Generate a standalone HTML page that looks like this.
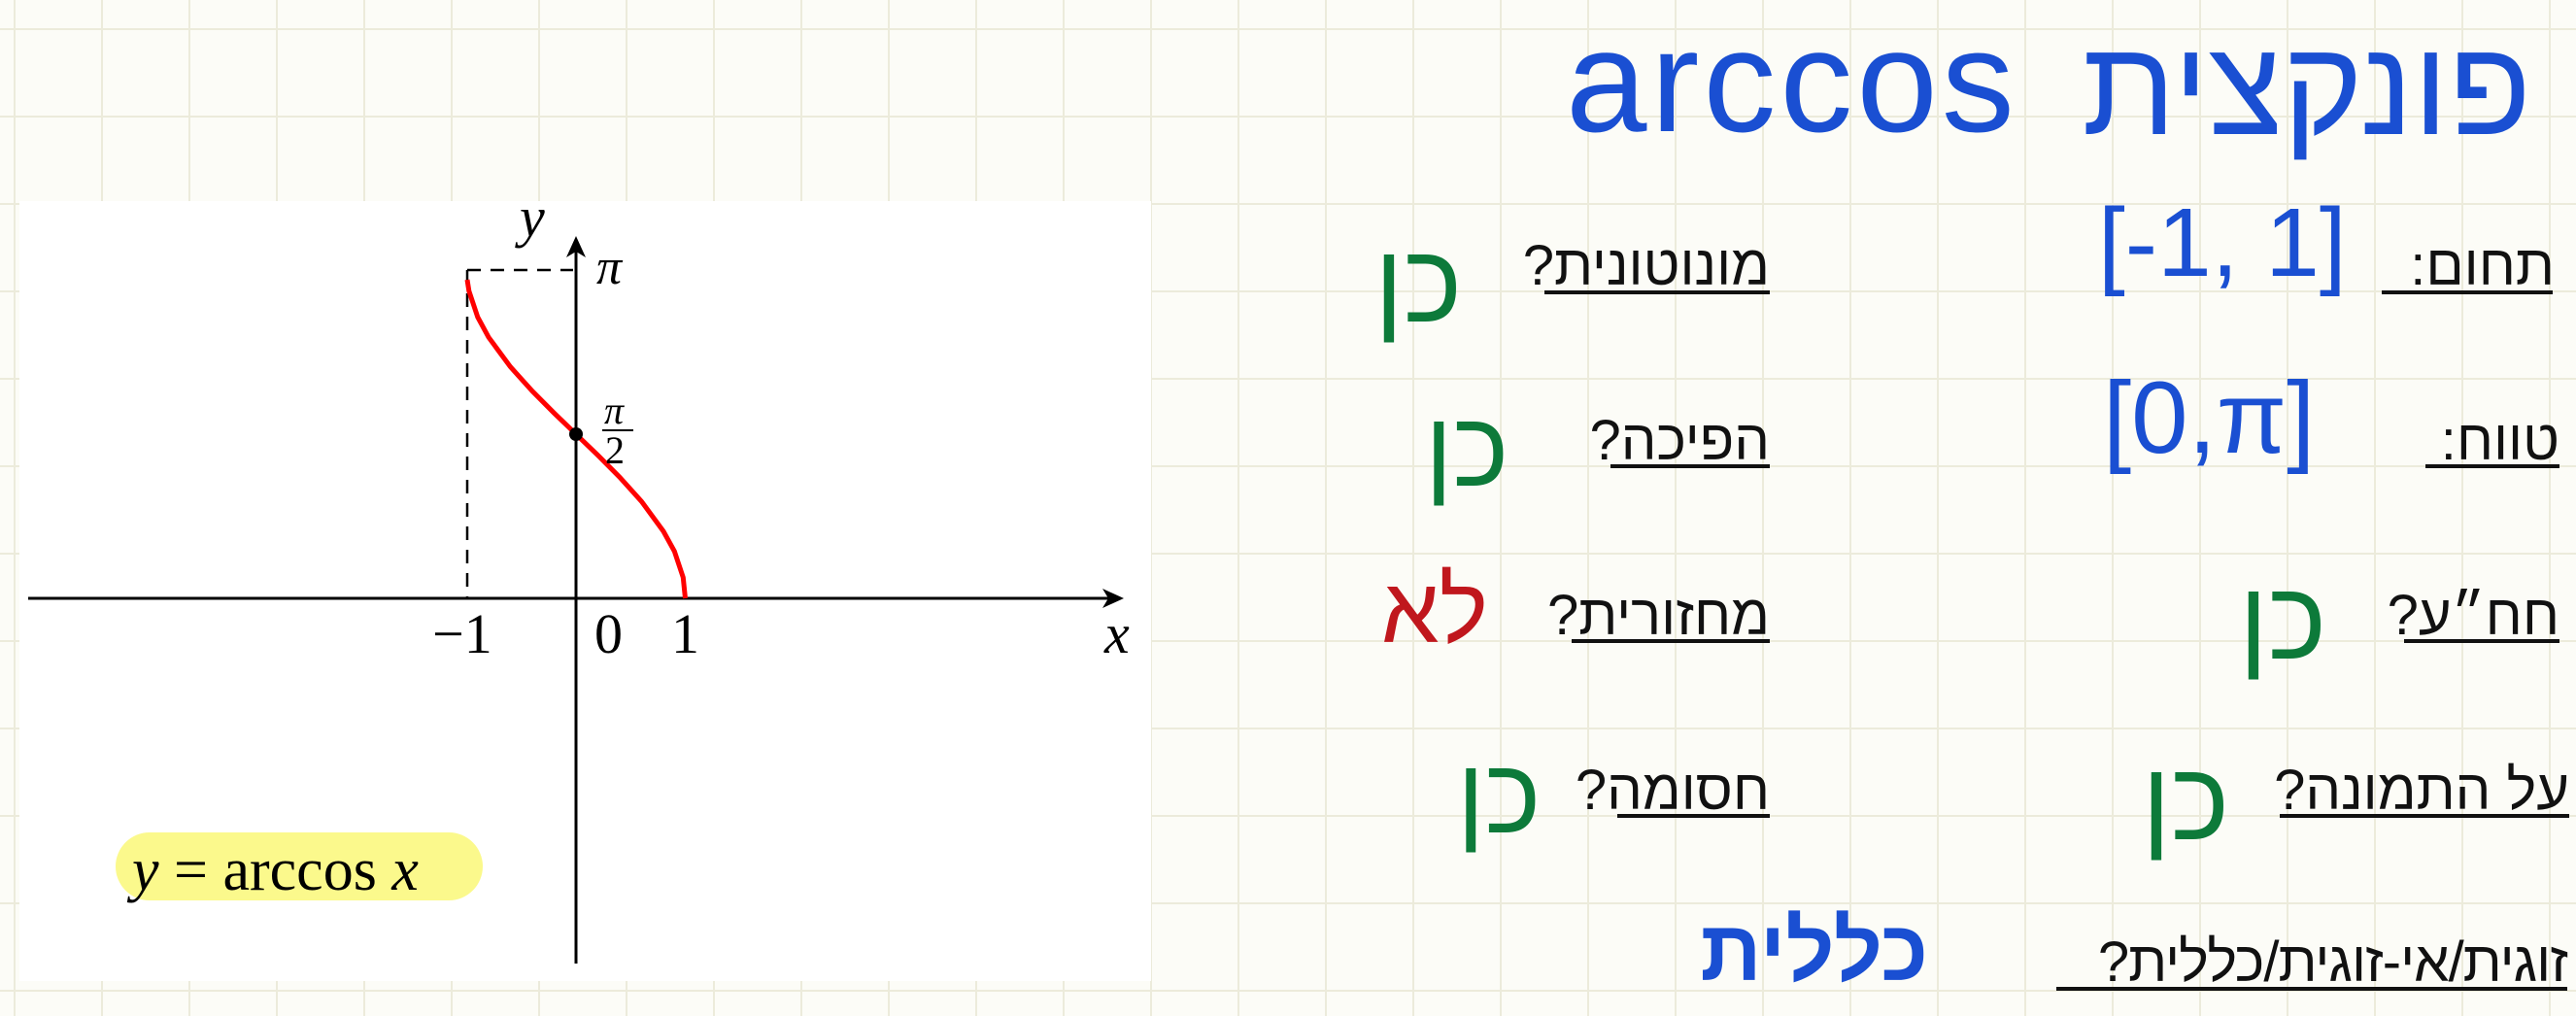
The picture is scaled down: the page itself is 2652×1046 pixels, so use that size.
<!DOCTYPE html>
<html><head><meta charset="utf-8"><style>
html,body{margin:0;padding:0}
body{width:2652px;height:1046px;position:relative;overflow:hidden;background-color:#fcfcf7;
background-image:linear-gradient(to right,#ecebdb 2px,transparent 2px),linear-gradient(to bottom,#ecebdb 2px,transparent 2px);
background-size:90px 90px;background-position:14px 29px;font-family:"Liberation Sans","DejaVu Sans",sans-serif}
.t{position:absolute;white-space:nowrap;direction:rtl;line-height:1}
.k{color:#111;font-size:58px}
.u{position:absolute;height:4px;background:#111}
.g{color:#0d7a3a}
.b{color:#1a4fd2}
.r{color:#c0171d}
</style></head><body>
<svg style="position:absolute;left:0;top:0" width="2652" height="1046">
<rect x="20" y="207" width="1165" height="803" fill="#fff"/>
<line x1="29" y1="616" x2="1148" y2="616" stroke="#000" stroke-width="3"/>
<path d="M1157 616 L1135 606 L1141 616 L1135 626Z" fill="#000"/>
<line x1="593" y1="992" x2="593" y2="252" stroke="#000" stroke-width="3"/>
<path d="M593 243 L583 265 L593 259 L603 265Z" fill="#000"/>
<path d="M481 278 H590 M481 278 V616" stroke="#000" stroke-width="2.5" stroke-dasharray="14 10" fill="none"/>
<polyline fill="none" stroke="#f00" stroke-width="5" points="481,288 482.8,299.5 491.8,326.5 503,347.2 525.5,377.7 548,402.7 570.5,425.3 593,447 615.5,468.7 638,491.3 660.5,516.3 683,547 694.3,567.5 703.3,594.5 705.5,616"/>
<circle cx="593" cy="447" r="7" fill="#000"/>
<rect x="119" y="857" width="378" height="70" rx="35" fill="#fbf98c"/>
<g font-family="Liberation Serif,serif" fill="#000">
<text x="535" y="243" font-size="58" font-style="italic">y</text>
<text x="614" y="292" font-size="52" font-style="italic">π</text>
<text x="622" y="436" font-size="40" font-style="italic">π</text>
<line x1="620" y1="443" x2="652" y2="443" stroke="#000" stroke-width="2"/>
<text x="623" y="477" font-size="40">2</text>
<text x="445" y="672" font-size="58">−1</text>
<text x="612" y="672" font-size="58">0</text>
<text x="691" y="672" font-size="58">1</text>
<text x="1137" y="672" font-size="58" font-style="italic">x</text>
<text x="136" y="916" font-size="62"><tspan font-style="italic">y</tspan> = arccos <tspan font-style="italic">x</tspan></text>
</g>
</svg>

<div class="t b" style="left:1612px;top:8px;font-size:150px;letter-spacing:4px">arccos</div>
<div class="t b" style="left:2176px;top:20px;font-size:140px;width:430px;text-align:right">פונקצית</div>

<div class="t k" style="left:2440px;top:245px;width:190px;text-align:right">תחום:</div>
<div class="u" style="left:2452px;top:299px;width:176px"></div>
<div class="t b" style="left:2160px;top:200px;font-size:100px;direction:ltr">[-1, 1]</div>
<div class="t k" style="left:1562px;top:245px;width:260px;text-align:right">מונוטונית?</div>
<div class="u" style="left:1590px;top:299px;width:232px"></div>
<div class="t g" style="left:1415px;top:235px;font-size:115px">כן</div>

<div class="t k" style="left:2480px;top:425px;width:155px;text-align:right">טווח:</div>
<div class="u" style="left:2497px;top:478px;width:138px"></div>
<div class="t b" style="left:2165px;top:378px;font-size:105px;direction:ltr">[0,π]</div>
<div class="t k" style="left:1625px;top:425px;width:197px;text-align:right">הפיכה?</div>
<div class="u" style="left:1658px;top:478px;width:164px"></div>
<div class="t g" style="left:1467px;top:408px;font-size:110px">כן</div>

<div class="t k" style="left:2455px;top:605px;width:180px;text-align:right">חח״ע?</div>
<div class="u" style="left:2475px;top:658px;width:160px"></div>
<div class="t g" style="left:2305px;top:582px;font-size:115px">כן</div>
<div class="t k" style="left:1585px;top:605px;width:237px;text-align:right">מחזורית?</div>
<div class="u" style="left:1618px;top:658px;width:204px"></div>
<div class="t r" style="left:1422px;top:582px;font-size:95px">לא</div>

<div class="t k" style="left:2310px;top:785px;width:335px;text-align:right">על התמונה?</div>
<div class="u" style="left:2347px;top:838px;width:298px"></div>
<div class="t g" style="left:2205px;top:768px;font-size:115px">כן</div>
<div class="t k" style="left:1635px;top:785px;width:187px;text-align:right">חסומה?</div>
<div class="u" style="left:1665px;top:838px;width:157px"></div>
<div class="t g" style="left:1500px;top:765px;font-size:110px">כן</div>

<div class="t k" style="left:2085px;top:962px;width:558px;text-align:right;letter-spacing:-1px">זוגית/אי-זוגית/כללית?</div>
<div class="u" style="left:2117px;top:1016px;width:526px"></div>
<div class="t b" style="left:1780px;top:935px;width:205px;text-align:right;font-size:88px;font-weight:bold">כללית</div>
</body></html>
